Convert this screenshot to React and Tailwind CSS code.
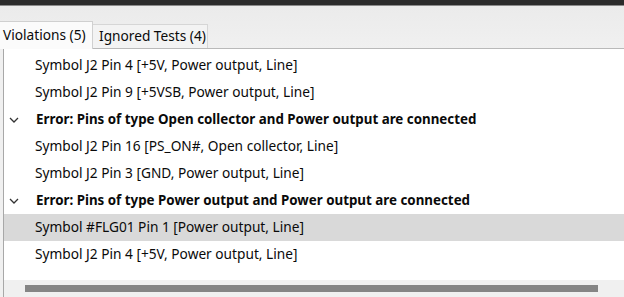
const rows = [
  { kind: "item", text: "Symbol J2 Pin 4 [+5V, Power output, Line]" },
  { kind: "item", text: "Symbol J2 Pin 9 [+5VSB, Power output, Line]" },
  { kind: "group", text: "Error: Pins of type Open collector and Power output are connected" },
  { kind: "item", text: "Symbol J2 Pin 16 [PS_ON#, Open collector, Line]" },
  { kind: "item", text: "Symbol J2 Pin 3 [GND, Power output, Line]" },
  { kind: "group", text: "Error: Pins of type Power output and Power output are connected" },
  { kind: "item", text: "Symbol #FLG01 Pin 1 [Power output, Line]", selected: true },
  { kind: "item", text: "Symbol J2 Pin 4 [+5V, Power output, Line]" },
];

function Chevron() {
  return (
    <svg width="10" height="6" viewBox="0 0 10 6" className="mr-[17px] ml-[5px]">
      <polyline points="1,1 5,5 9,1" fill="none" stroke="#333" strokeWidth="1.3" />
    </svg>
  );
}

export default function App() {
  return (
    <div
      className="w-[624px] h-[297px] overflow-hidden bg-[#f0f0f0] flex flex-col text-[#0a0a0a]"
      style={{ fontFamily: '"Noto Sans", "Open Sans", sans-serif' }}
    >
      <div className="h-[5px] bg-[#2b2b2b] shrink-0" />
      <div className="h-px bg-[#8a8a8a] shrink-0" />
      {/* Tabs */}
      <div className="h-[43px] shrink-0 flex items-end border-b border-[#b9b9b9] bg-gradient-to-b from-[#ebebeb] to-[#f0f0f0]">
        <div className="h-[28px] w-[93px] bg-[#fbfbfb] border-t border-r border-[#d0d0d0] flex items-center pl-[3px] text-[13.7px] -mb-px relative z-10">
          Violations (5)
        </div>
        <div className="h-[24px] w-[115px] bg-[#f3f3f3] border-t border-r border-[#d6d6d6] flex items-center pl-[6px] text-[13.7px]">
          Ignored Tests (4)
        </div>
      </div>
      {/* Tree */}
      <div className="flex-1 ml-[3px] border-l border-[#a8a8a8] bg-white flex flex-col">
        <div className="pt-[3px] flex flex-col">
          {rows.map((r, i) => (
            <div
              key={i}
              className={
                "h-[27px] flex items-center " +
                (r.selected ? "bg-[#d9d9d9]" : "")
              }
            >
              {r.kind === "group" ? (
                <>
                  <Chevron />
                  <span className="font-bold text-[13.35px]">{r.text}</span>
                </>
              ) : (
                <span className="pl-[31px] text-[13.7px]">{r.text}</span>
              )}
            </div>
          ))}
        </div>
        <div className="flex-1" />
        <div className="h-[17px] bg-[#f0f0f0] flex items-center pl-[21px] shrink-0">
          <div className="w-[573px] h-[7px] bg-[#858585]" />
        </div>
      </div>
    </div>
  );
}
